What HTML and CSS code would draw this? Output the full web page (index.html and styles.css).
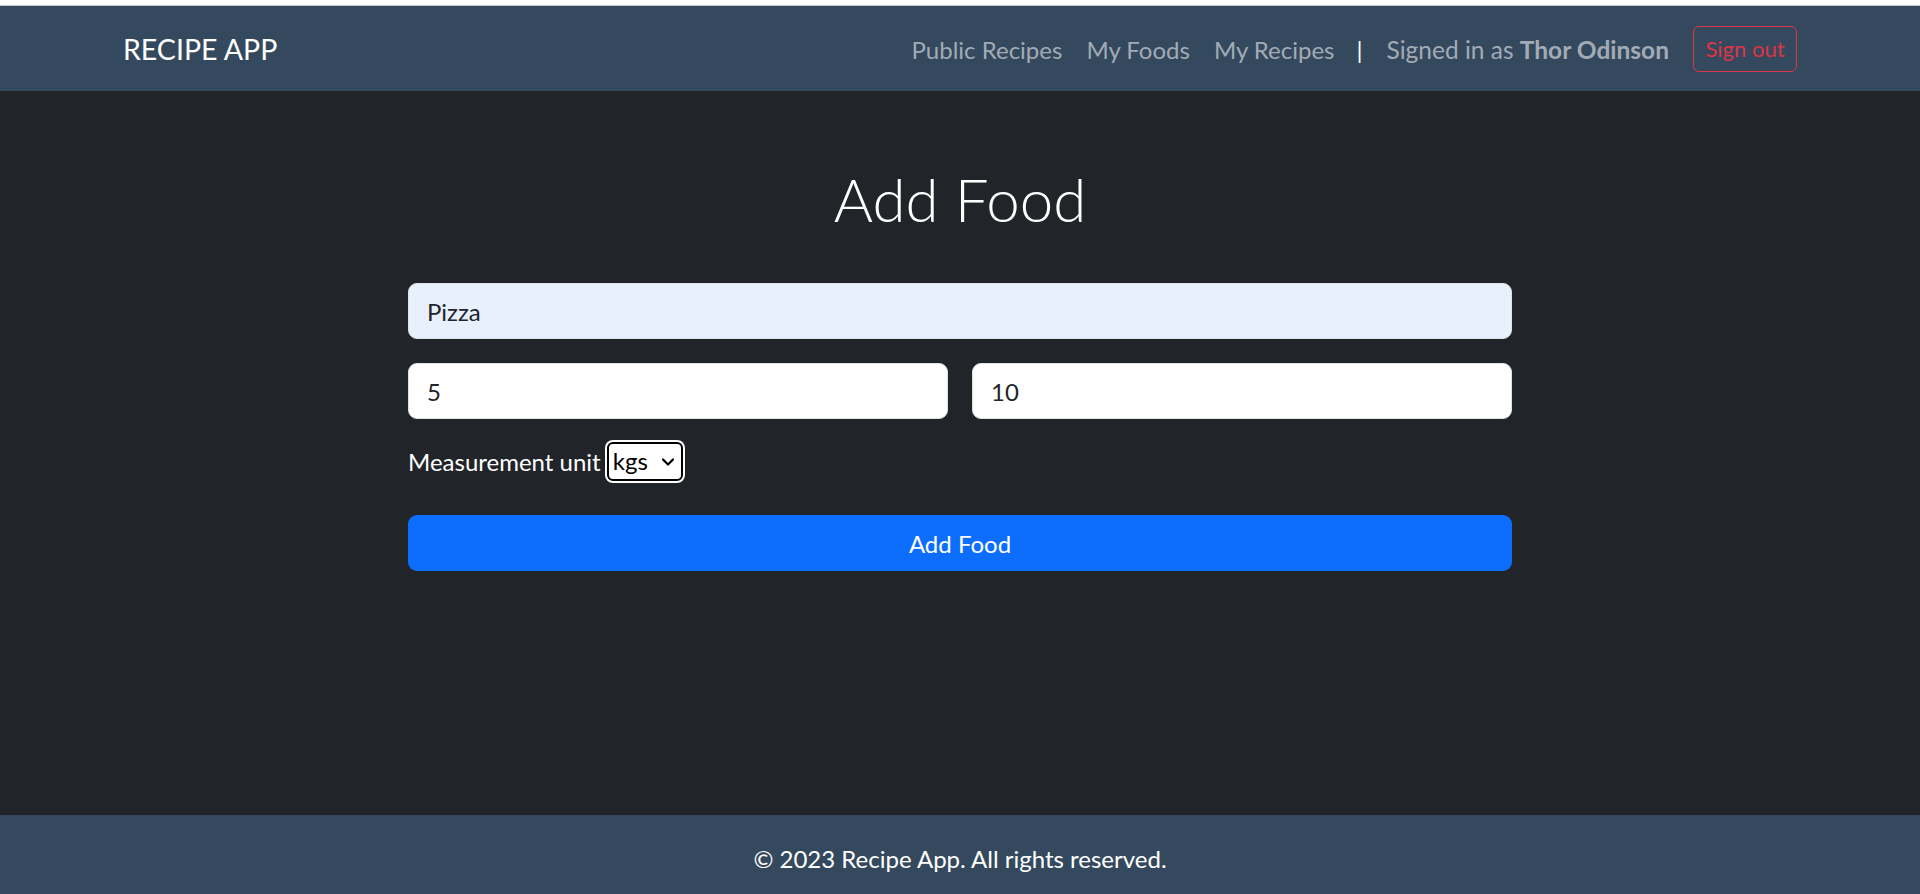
FILE: index.html
```html
<!DOCTYPE html>
<html lang="en">
<head>
<meta charset="utf-8">
<title>Recipe App - Add Food</title>
<link rel="stylesheet" href="styles.css">
</head>
<body>
<div class="topstrip"></div>
<header class="navbar">
  <div class="nav-container">
    <a class="brand" href="#">RECIPE APP</a>
    <nav class="nav-right">
      <a class="nav-link" href="#">Public Recipes</a>
      <a class="nav-link" href="#">My Foods</a>
      <a class="nav-link" href="#">My Recipes</a>
      <span class="divider">|</span>
      <span class="signed">Signed in as <strong>Thor Odinson</strong></span>
      <button class="btn-signout" type="button">Sign out</button>
    </nav>
  </div>
</header>
<main class="main">
  <h1 class="title">Add Food</h1>
  <form class="food-form">
    <input class="field field-autofill" type="text" value="Pizza">
    <div class="row">
      <input class="field" type="text" value="5">
      <input class="field" type="text" value="10">
    </div>
    <div class="unit-row">
      <label class="unit-label">Measurement unit</label>
      <div class="select-box">
        <span class="select-value">kgs</span>
        <svg class="chev" width="14" height="10" viewBox="0 0 14 10"><path d="M2 2.5 L7 7.5 L12 2.5" fill="none" stroke="#000" stroke-width="2.2" stroke-linecap="round" stroke-linejoin="round"/></svg>
      </div>
    </div>
    <button class="btn-primary" type="button">Add Food</button>
  </form>
</main>
<footer class="footer">
  <p class="footer-text">© 2023 Recipe App. All rights reserved.</p>
</footer>
</body>
</html>
```
FILE: styles.css
```css
* { box-sizing: border-box; }
html, body { margin: 0; padding: 0; }
body {
  background: #212529;
  font-family: Lato, "Noto Sans", sans-serif;
  font-size: 24px;
  color: #fff;
  min-height: 894px;
  display: flex;
  flex-direction: column;
}
.topstrip {
  height: 6px;
  background: #fff;
  border-bottom: 1px solid #c8c8c8;
}
.navbar {
  height: 85px;
  background: #34495e;
}
.nav-container {
  width: 1710px;
  margin: 0 auto;
  padding: 0 18px;
  height: 100%;
  display: flex;
  align-items: center;
  justify-content: space-between;
}
.brand {
  color: #fff;
  text-decoration: none;
  font-size: 28.5px;
  margin-top: 1px;
}
.nav-right {
  display: flex;
  align-items: center;
  margin-top: 2px;
}
.nav-link {
  color: #a2abb5;
  text-decoration: none;
  padding: 0 12px;
}
.divider {
  color: #fff;
  padding: 0 12px 0 10px;
}
.signed {
  color: #a2abb5;
  padding: 0 12px;
  font-size: 24.5px;
}
.signed strong { font-weight: 700; }
.btn-signout {
  margin-left: 12px;
  margin-top: -2px;
  height: 46px;
  width: 104px;
  background: transparent;
  border: 1.5px solid #dc3545;
  border-radius: 6px;
  color: #dc3545;
  font-family: inherit;
  font-size: 22px;
  padding: 0;
}
.main {
  flex: 1;
  display: flex;
  flex-direction: column;
  align-items: center;
}
.title {
  margin: 72px 0 0;
  font-size: 60px;
  font-weight: 300;
  line-height: 72px;
  height: 72px;
}
.food-form {
  width: 1104px;
  margin-top: 48px;
  display: flex;
  flex-direction: column;
}
.field {
  height: 56px;
  width: 100%;
  border: 1.5px solid #dee2e6;
  border-radius: 9px;
  background: #fff;
  padding: 0 18px;
  font-family: inherit;
  font-size: 24px;
  color: #212529;
  outline: none;
}
.field-autofill { background: #e8f0fe; }
.row {
  display: flex;
  gap: 24px;
  margin-top: 24px;
}
.unit-row {
  display: flex;
  align-items: center;
  margin-top: 23px;
  height: 39px;
}
.unit-label {
  color: #fff;
  margin-right: 6px;
}
.select-box {
  height: 39px;
  width: 76px;
  background: #fff;
  border: 2px solid #000;
  border-radius: 6px;
  box-shadow: 0 0 0 2px #fff;
  display: flex;
  align-items: center;
  padding: 0 6px 0 4px;
  justify-content: space-between;
  color: #000;
}
.select-value { font-size: 24px; line-height: 1; margin-top: -2px; }
.chev { display: block; }
.btn-primary {
  margin-top: 34px;
  height: 56px;
  width: 100%;
  background: #0d6efd;
  border: none;
  border-radius: 9px;
  color: #fff;
  font-family: inherit;
  font-size: 24px;
}
.footer {
  height: 79px;
  background: #34495e;
  display: flex;
  align-items: center;
  justify-content: center;
  padding-top: 8px;
}
.footer-text { margin: 0; color: #fff; }
```
